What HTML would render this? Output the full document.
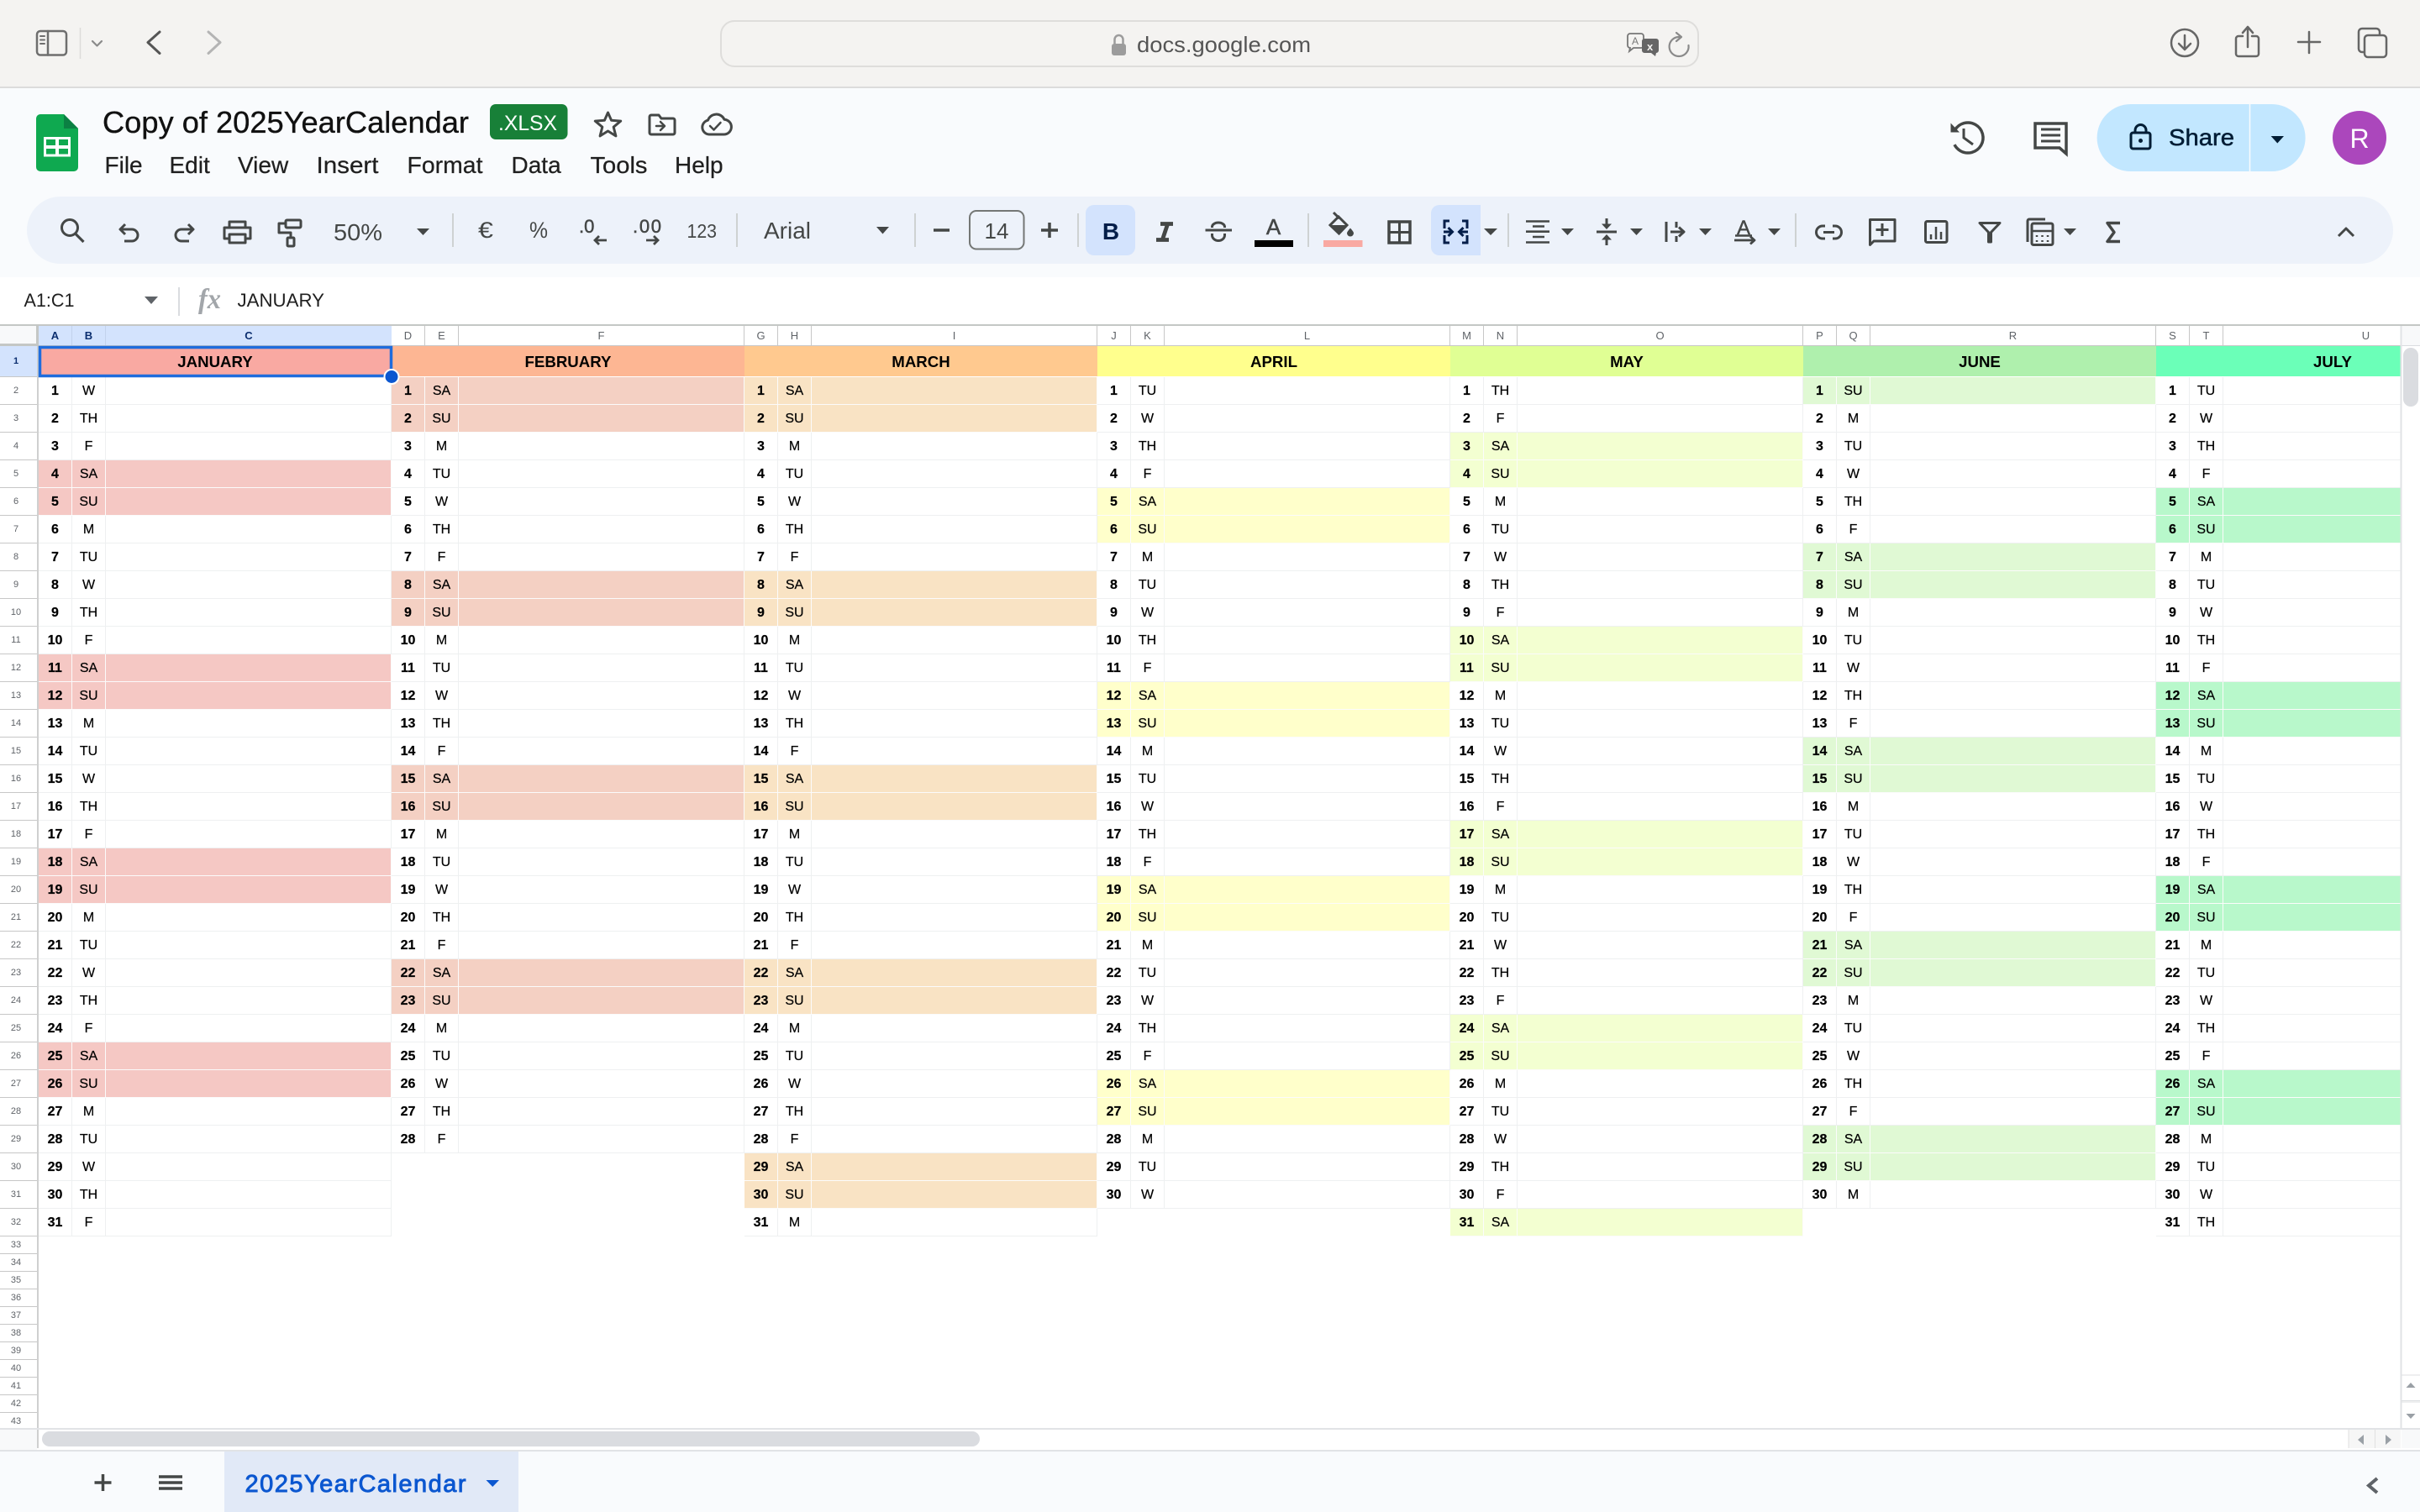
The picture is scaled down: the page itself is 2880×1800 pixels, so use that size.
<!DOCTYPE html>
<html><head><meta charset="utf-8"><title>Copy of 2025YearCalendar</title>
<style>
html,body{margin:0;padding:0;width:2880px;height:1800px;overflow:hidden;background:#fff;font-family:"Liberation Sans",Arial,sans-serif}
.a{position:absolute}
#ch{left:46px;top:388px;width:2811px;height:24px;overflow:hidden;background:#fff;display:flex;border-bottom:1px solid #c7c7c7;box-sizing:border-box;font-size:13px;color:#5f6368;line-height:23px;text-align:center}
#ch span{flex:0 0 auto;width:40px;box-sizing:border-box;border-right:1px solid #c7c7c7;height:24px}
#ch span.l{width:340px}
#ch span.s{background:#d3e3fd;color:#0b2e6f;font-weight:bold;border-right-color:#c2d2ec}
#rh{left:0;top:412px;width:46px;height:1288px;overflow:hidden;background:#fff;border-right:2px solid #cfd0d0;box-sizing:border-box;font-size:11px;color:#5f6368;text-align:center;padding-right:6px}
#rh div{height:33px;line-height:33px;box-sizing:border-box;border-bottom:1px solid #c7c7c7;margin-right:-6px;padding-right:6px}
#rh div.h1{height:37px;line-height:36px;background:#d3e3fd;color:#0b2e6f;font-weight:bold}
#rh div.t{height:21px;line-height:20px}
#g{left:46px;top:412px;width:2811px;height:1288px;overflow:hidden;background:#fff}
.m{position:absolute;top:0;width:420px}
.m h3{margin:0;height:37px;line-height:37px;font-size:18.67px;font-weight:bold;text-align:center;color:#000;border-bottom:1px solid #fff;box-sizing:border-box}
.m p{margin:0;height:33px;display:flex;box-sizing:border-box;border-bottom:1px solid #eef0f1;border-right:1px solid #eef0f1;font-size:16px;line-height:33px;color:#000}
.m b,.m i{width:40px;font-style:normal;text-align:center;box-sizing:border-box;border-right:1px solid #eef0f1;-webkit-text-stroke:.2px #000}
.m p.w,.m p.w b,.m p.w i{border-color:#fbfbfb}
.j p.w{background:#f5c8c4}.f p.w{background:#f4d0c3}.r p.w{background:#f9e3c4}.p p.w{background:#ffffcb}.y p.w{background:#f3ffd1}.n p.w{background:#e0f9d4}.u p.w{background:#b8f8cb}
#top{left:0;top:0;width:2880px;height:105px;background:#f4f3f1;border-bottom:2px solid #dcdcdc;box-sizing:border-box}
#hd{left:0;top:105px;width:2880px;height:225px;background:#f9fbfd}
#ft{left:0;top:1726px;width:2880px;height:74px;background:#f9fbfd;border-top:2px solid #e1e3e6;box-sizing:border-box}
svg{position:absolute;left:0;top:0}
svg text{font-family:"Liberation Sans",Arial,sans-serif}
</style></head><body>
<div class="a" id="top"></div>
<div class="a" id="hd"></div>
<div class="a" id="ch"><span class="s">A</span><span class="s">B</span><span class="s l" style="border-right:0">C</span><span>D</span><span>E</span><span class="l">F</span><span>G</span><span>H</span><span class="l">I</span><span>J</span><span>K</span><span class="l">L</span><span>M</span><span>N</span><span class="l">O</span><span>P</span><span>Q</span><span class="l">R</span><span>S</span><span>T</span><span class="l">U</span></div>
<div class="a" style="left:0;top:388px;width:46px;height:24px;background:#f8f9fa;border-right:3px solid #c4c7c5;border-bottom:3px solid #c4c7c5;box-sizing:border-box"></div>
<div class="a" style="left:0;top:386px;width:2880px;height:2px;background:#c4c7c5"></div>
<div class="a" id="rh"><div class="h1">1</div><div>2</div><div>3</div><div>4</div><div>5</div><div>6</div><div>7</div><div>8</div><div>9</div><div>10</div><div>11</div><div>12</div><div>13</div><div>14</div><div>15</div><div>16</div><div>17</div><div>18</div><div>19</div><div>20</div><div>21</div><div>22</div><div>23</div><div>24</div><div>25</div><div>26</div><div>27</div><div>28</div><div>29</div><div>30</div><div>31</div><div>32</div><div class="t">33</div><div class="t">34</div><div class="t">35</div><div class="t">36</div><div class="t">37</div><div class="t">38</div><div class="t">39</div><div class="t">40</div><div class="t">41</div><div class="t">42</div><div class="t">43</div></div>
<div class="a" id="g">
<div class="m j" style="left:0"><h3 style="background:#f9a9a2">JANUARY</h3>
<p><b>1</b><i>W</i></p><p><b>2</b><i>TH</i></p><p><b>3</b><i>F</i></p><p class="w"><b>4</b><i>SA</i></p><p class="w"><b>5</b><i>SU</i></p><p><b>6</b><i>M</i></p><p><b>7</b><i>TU</i></p><p><b>8</b><i>W</i></p><p><b>9</b><i>TH</i></p><p><b>10</b><i>F</i></p><p class="w"><b>11</b><i>SA</i></p><p class="w"><b>12</b><i>SU</i></p><p><b>13</b><i>M</i></p><p><b>14</b><i>TU</i></p><p><b>15</b><i>W</i></p><p><b>16</b><i>TH</i></p><p><b>17</b><i>F</i></p><p class="w"><b>18</b><i>SA</i></p><p class="w"><b>19</b><i>SU</i></p><p><b>20</b><i>M</i></p><p><b>21</b><i>TU</i></p><p><b>22</b><i>W</i></p><p><b>23</b><i>TH</i></p><p><b>24</b><i>F</i></p><p class="w"><b>25</b><i>SA</i></p><p class="w"><b>26</b><i>SU</i></p><p><b>27</b><i>M</i></p><p><b>28</b><i>TU</i></p><p><b>29</b><i>W</i></p><p><b>30</b><i>TH</i></p><p><b>31</b><i>F</i></p></div>
<div class="m f" style="left:420px"><h3 style="background:#fdb693">FEBRUARY</h3>
<p class="w"><b>1</b><i>SA</i></p><p class="w"><b>2</b><i>SU</i></p><p><b>3</b><i>M</i></p><p><b>4</b><i>TU</i></p><p><b>5</b><i>W</i></p><p><b>6</b><i>TH</i></p><p><b>7</b><i>F</i></p><p class="w"><b>8</b><i>SA</i></p><p class="w"><b>9</b><i>SU</i></p><p><b>10</b><i>M</i></p><p><b>11</b><i>TU</i></p><p><b>12</b><i>W</i></p><p><b>13</b><i>TH</i></p><p><b>14</b><i>F</i></p><p class="w"><b>15</b><i>SA</i></p><p class="w"><b>16</b><i>SU</i></p><p><b>17</b><i>M</i></p><p><b>18</b><i>TU</i></p><p><b>19</b><i>W</i></p><p><b>20</b><i>TH</i></p><p><b>21</b><i>F</i></p><p class="w"><b>22</b><i>SA</i></p><p class="w"><b>23</b><i>SU</i></p><p><b>24</b><i>M</i></p><p><b>25</b><i>TU</i></p><p><b>26</b><i>W</i></p><p><b>27</b><i>TH</i></p><p><b>28</b><i>F</i></p></div>
<div class="m r" style="left:840px"><h3 style="background:#ffc98f">MARCH</h3>
<p class="w"><b>1</b><i>SA</i></p><p class="w"><b>2</b><i>SU</i></p><p><b>3</b><i>M</i></p><p><b>4</b><i>TU</i></p><p><b>5</b><i>W</i></p><p><b>6</b><i>TH</i></p><p><b>7</b><i>F</i></p><p class="w"><b>8</b><i>SA</i></p><p class="w"><b>9</b><i>SU</i></p><p><b>10</b><i>M</i></p><p><b>11</b><i>TU</i></p><p><b>12</b><i>W</i></p><p><b>13</b><i>TH</i></p><p><b>14</b><i>F</i></p><p class="w"><b>15</b><i>SA</i></p><p class="w"><b>16</b><i>SU</i></p><p><b>17</b><i>M</i></p><p><b>18</b><i>TU</i></p><p><b>19</b><i>W</i></p><p><b>20</b><i>TH</i></p><p><b>21</b><i>F</i></p><p class="w"><b>22</b><i>SA</i></p><p class="w"><b>23</b><i>SU</i></p><p><b>24</b><i>M</i></p><p><b>25</b><i>TU</i></p><p><b>26</b><i>W</i></p><p><b>27</b><i>TH</i></p><p><b>28</b><i>F</i></p><p class="w"><b>29</b><i>SA</i></p><p class="w"><b>30</b><i>SU</i></p><p><b>31</b><i>M</i></p></div>
<div class="m p" style="left:1260px"><h3 style="background:#ffff8d">APRIL</h3>
<p><b>1</b><i>TU</i></p><p><b>2</b><i>W</i></p><p><b>3</b><i>TH</i></p><p><b>4</b><i>F</i></p><p class="w"><b>5</b><i>SA</i></p><p class="w"><b>6</b><i>SU</i></p><p><b>7</b><i>M</i></p><p><b>8</b><i>TU</i></p><p><b>9</b><i>W</i></p><p><b>10</b><i>TH</i></p><p><b>11</b><i>F</i></p><p class="w"><b>12</b><i>SA</i></p><p class="w"><b>13</b><i>SU</i></p><p><b>14</b><i>M</i></p><p><b>15</b><i>TU</i></p><p><b>16</b><i>W</i></p><p><b>17</b><i>TH</i></p><p><b>18</b><i>F</i></p><p class="w"><b>19</b><i>SA</i></p><p class="w"><b>20</b><i>SU</i></p><p><b>21</b><i>M</i></p><p><b>22</b><i>TU</i></p><p><b>23</b><i>W</i></p><p><b>24</b><i>TH</i></p><p><b>25</b><i>F</i></p><p class="w"><b>26</b><i>SA</i></p><p class="w"><b>27</b><i>SU</i></p><p><b>28</b><i>M</i></p><p><b>29</b><i>TU</i></p><p><b>30</b><i>W</i></p></div>
<div class="m y" style="left:1680px"><h3 style="background:#e0ff94">MAY</h3>
<p><b>1</b><i>TH</i></p><p><b>2</b><i>F</i></p><p class="w"><b>3</b><i>SA</i></p><p class="w"><b>4</b><i>SU</i></p><p><b>5</b><i>M</i></p><p><b>6</b><i>TU</i></p><p><b>7</b><i>W</i></p><p><b>8</b><i>TH</i></p><p><b>9</b><i>F</i></p><p class="w"><b>10</b><i>SA</i></p><p class="w"><b>11</b><i>SU</i></p><p><b>12</b><i>M</i></p><p><b>13</b><i>TU</i></p><p><b>14</b><i>W</i></p><p><b>15</b><i>TH</i></p><p><b>16</b><i>F</i></p><p class="w"><b>17</b><i>SA</i></p><p class="w"><b>18</b><i>SU</i></p><p><b>19</b><i>M</i></p><p><b>20</b><i>TU</i></p><p><b>21</b><i>W</i></p><p><b>22</b><i>TH</i></p><p><b>23</b><i>F</i></p><p class="w"><b>24</b><i>SA</i></p><p class="w"><b>25</b><i>SU</i></p><p><b>26</b><i>M</i></p><p><b>27</b><i>TU</i></p><p><b>28</b><i>W</i></p><p><b>29</b><i>TH</i></p><p><b>30</b><i>F</i></p><p class="w"><b>31</b><i>SA</i></p></div>
<div class="m n" style="left:2100px"><h3 style="background:#aff0ad">JUNE</h3>
<p class="w"><b>1</b><i>SU</i></p><p><b>2</b><i>M</i></p><p><b>3</b><i>TU</i></p><p><b>4</b><i>W</i></p><p><b>5</b><i>TH</i></p><p><b>6</b><i>F</i></p><p class="w"><b>7</b><i>SA</i></p><p class="w"><b>8</b><i>SU</i></p><p><b>9</b><i>M</i></p><p><b>10</b><i>TU</i></p><p><b>11</b><i>W</i></p><p><b>12</b><i>TH</i></p><p><b>13</b><i>F</i></p><p class="w"><b>14</b><i>SA</i></p><p class="w"><b>15</b><i>SU</i></p><p><b>16</b><i>M</i></p><p><b>17</b><i>TU</i></p><p><b>18</b><i>W</i></p><p><b>19</b><i>TH</i></p><p><b>20</b><i>F</i></p><p class="w"><b>21</b><i>SA</i></p><p class="w"><b>22</b><i>SU</i></p><p><b>23</b><i>M</i></p><p><b>24</b><i>TU</i></p><p><b>25</b><i>W</i></p><p><b>26</b><i>TH</i></p><p><b>27</b><i>F</i></p><p class="w"><b>28</b><i>SA</i></p><p class="w"><b>29</b><i>SU</i></p><p><b>30</b><i>M</i></p></div>
<div class="m u" style="left:2520px"><h3 style="background:#6bffb8">JULY</h3>
<p><b>1</b><i>TU</i></p><p><b>2</b><i>W</i></p><p><b>3</b><i>TH</i></p><p><b>4</b><i>F</i></p><p class="w"><b>5</b><i>SA</i></p><p class="w"><b>6</b><i>SU</i></p><p><b>7</b><i>M</i></p><p><b>8</b><i>TU</i></p><p><b>9</b><i>W</i></p><p><b>10</b><i>TH</i></p><p><b>11</b><i>F</i></p><p class="w"><b>12</b><i>SA</i></p><p class="w"><b>13</b><i>SU</i></p><p><b>14</b><i>M</i></p><p><b>15</b><i>TU</i></p><p><b>16</b><i>W</i></p><p><b>17</b><i>TH</i></p><p><b>18</b><i>F</i></p><p class="w"><b>19</b><i>SA</i></p><p class="w"><b>20</b><i>SU</i></p><p><b>21</b><i>M</i></p><p><b>22</b><i>TU</i></p><p><b>23</b><i>W</i></p><p><b>24</b><i>TH</i></p><p><b>25</b><i>F</i></p><p class="w"><b>26</b><i>SA</i></p><p class="w"><b>27</b><i>SU</i></p><p><b>28</b><i>M</i></p><p><b>29</b><i>TU</i></p><p><b>30</b><i>W</i></p><p><b>31</b><i>TH</i></p></div>
</div>
<div class="a" id="ft"></div>

<svg width="2880" height="1800" viewBox="0 0 2880 1800" xmlns="http://www.w3.org/2000/svg">
<!-- selection -->
<rect x="47.5" y="413.5" width="418" height="34" fill="none" stroke="#1f6cdc" stroke-width="3.5"/>
<circle cx="466" cy="448.5" r="8.5" fill="#0b57d0" stroke="#fff" stroke-width="2"/>

<!-- browser bar -->
<g fill="none" stroke="#6e6e6e" stroke-width="2.5" stroke-linecap="round" stroke-linejoin="round">
<rect x="44" y="37" width="35" height="28.5" rx="4"/><path d="M57 37v28.5"/><path d="M48 43h5M48 47.5h5M48 52h5" stroke-width="2"/>
</g>
<path d="M95.5 33v37" stroke="#dcdbd9" stroke-width="1.5"/>
<path d="M110 49l5.5 5.5 5.5-5.5" fill="none" stroke="#8a8a8a" stroke-width="2.2" stroke-linecap="round" stroke-linejoin="round"/>
<path d="M190 38l-14 12.5 14 13" fill="none" stroke="#555" stroke-width="3" stroke-linecap="round" stroke-linejoin="round"/>
<path d="M248 38l14 12.5-14 13" fill="none" stroke="#b4b4b4" stroke-width="3" stroke-linecap="round" stroke-linejoin="round"/>
<rect x="858" y="25" width="1163" height="54" rx="16" fill="#f4f3f1" stroke="#dedddb" stroke-width="2"/>
<rect x="1323" y="52" width="17" height="14" rx="3" fill="#9c9c9c"/><path d="M1326.5 52v-5a5 5 0 0 1 10 0v5" fill="none" stroke="#9c9c9c" stroke-width="2.5"/>
<text x="1353" y="62" font-size="26" fill="#555" textLength="207" lengthAdjust="spacingAndGlyphs">docs.google.com</text>
<path d="M1940 40h13a3 3 0 0 1 3 3v11a3 3 0 0 1-3 3h-9l-5 4 1-4a3 3 0 0 1-3-3V43a3 3 0 0 1 3-3z" fill="#f4f3f1" stroke="#777" stroke-width="1.8"/>
<text x="1942" y="53" font-size="12" fill="#777">A</text>
<path d="M1957 46h14a3 3 0 0 1 3 3v11a3 3 0 0 1-3 3l-1 4-5-4h-8a3 3 0 0 1-3-3V49a3 3 0 0 1 3-3z" fill="#666"/>
<text x="1960" y="60" font-size="13" fill="#f4f3f1" font-weight="bold">x</text>
<path d="M1998 44a11.5 11.5 0 1 0 11.5 10" fill="none" stroke="#8a8a8a" stroke-width="2.2" stroke-linecap="round"/><path d="M1995 39l6 5-6 5" fill="none" stroke="#8a8a8a" stroke-width="2.2" stroke-linecap="round" stroke-linejoin="round"/>
<g fill="none" stroke="#666" stroke-width="2.5" stroke-linecap="round" stroke-linejoin="round">
<circle cx="2600" cy="51" r="16"/><path d="M2600 42v17M2593 52l7 7 7-7"/>
<path d="M2669 43h-5a3 3 0 0 0-3 3v18a3 3 0 0 0 3 3h21a3 3 0 0 0 3-3V46a3 3 0 0 0-3-3h-5M2675 33v23M2669 39l6-7 6 7"/>
<path d="M2748 38v25M2735 50h26"/>
<rect x="2807" y="34" width="25" height="28" rx="4"/><rect x="2814" y="42" width="26" height="26" rx="4" fill="#f4f3f1"/>
</g>

<!-- doc header -->
<path d="M48 136H76L93 153V199a5 5 0 0 1-5 5H48a5 5 0 0 1-5-5V141a5 5 0 0 1 5-5Z" fill="#0fa950"/>
<path d="M76 136V153H93Z" fill="#0b8043"/>
<rect x="52" y="163" width="32" height="23.5" fill="#fff"/>
<g fill="#0fa950"><rect x="55" y="166" width="11" height="7"/><rect x="70" y="166" width="11" height="7"/><rect x="55" y="177" width="11" height="6.5"/><rect x="70" y="177" width="11" height="6.5"/></g>
<text x="122" y="158" font-size="36" fill="#111" stroke="#111" stroke-width=".35" textLength="436" lengthAdjust="spacingAndGlyphs">Copy of 2025YearCalendar</text>
<rect x="583" y="124" width="92.5" height="42" rx="7" fill="#188038"/>
<text x="593" y="155" font-size="25" fill="#fff" textLength="70" lengthAdjust="spacingAndGlyphs">.XLSX</text>
<g fill="none" stroke="#444746" stroke-width="3" stroke-linejoin="round" stroke-linecap="round">
<path d="M723.5 134l4.1 9.3 11.1.8-8.5 7.1 2.7 10.7-9.4-5.9-9.4 5.9 2.7-10.7-8.5-7.1 11.1-.8z"/>
<path d="M775 137h9l3 4h14a2 2 0 0 1 2 2v15a2 2 0 0 1-2 2h-26a2 2 0 0 1-2-2v-19a2 2 0 0 1 2-2z"/>
<path d="M781 150h9M786 145l5 5-5 5" stroke-width="2.5"/>
<path d="M844 160a8.5 8.5 0 0 1-1.5-16.8 10.5 10.5 0 0 1 19.5-1 8.700 8.700 0 0 1-1 17.800z"/>
<path d="M845 150l4.500 4.500 8-8.500" stroke-width="2.500"/>
</g>
<g font-size="28" fill="#1f1f1f" stroke="#1f1f1f" stroke-width=".25">
<text x="124.500" y="206">File</text><text x="201.500" y="206">Edit</text><text x="283" y="206">View</text><text x="376.500" y="206" textLength="74" lengthAdjust="spacingAndGlyphs">Insert</text><text x="484.500" y="206" textLength="90" lengthAdjust="spacingAndGlyphs">Format</text><text x="608.500" y="206">Data</text><text x="702.500" y="206" textLength="68" lengthAdjust="spacingAndGlyphs">Tools</text><text x="803" y="206">Help</text>
</g>
<g fill="none" stroke="#444746" stroke-width="3.500" stroke-linejoin="miter">
<circle cx="2342" cy="164" r="18" stroke-dasharray="95 18" transform="rotate(-150 2342 164)"/>
<path d="M2337 153v11l11 8" stroke-width="3"/>
<path d="M2422 147h37v36l-8-7h-29z"/>
<path d="M2429 154h23M2429 161h23M2429 168h23" stroke-width="3"/>
</g>
<path d="M2321.500 146.500v11h10.500z" fill="#444746"/>
<rect x="2495.600" y="124" width="248" height="80" rx="40" fill="#c2e7ff"/>
<path d="M2677.500 124v80" stroke="#f9fbfd" stroke-width="1.500"/>
<rect x="2536" y="158" width="23" height="19" rx="2.500" fill="none" stroke="#001d35" stroke-width="3"/>
<path d="M2541 158v-3a6.500 6.500 0 0 1 13 0v3" fill="none" stroke="#001d35" stroke-width="3"/><circle cx="2547.500" cy="167.500" r="2.500" fill="#001d35"/>
<text x="2581" y="173" font-size="28" fill="#001d35" stroke="#001d35" stroke-width=".5" textLength="78" lengthAdjust="spacingAndGlyphs">Share</text>
<path d="M2702.600 162h15.400l-7.700 8.500z" fill="#001d35"/>
<circle cx="2808" cy="164" r="32" fill="#ab47bc"/>
<text x="2808" y="176" font-size="32" fill="#fff" text-anchor="middle">R</text>

<!-- toolbar -->
<rect x="32" y="234" width="2816" height="80" rx="40" fill="#edf2fa"/>
<g fill="none" stroke="#444746" stroke-width="3" stroke-linejoin="round" stroke-linecap="butt">
<circle cx="83" cy="271" r="9.500"/><path d="M89.500 278l10 10" stroke-width="3.200"/>
<path d="M149 267l-6 6 6 6M144 273h13a7 7 0 0 1 0 14h-9"/>
<path d="M224 267l6 6-6 6M229 273h-13a7 7 0 0 0 0 14h9"/>
<path d="M273 271v-7h19v7M273 284h-6v-13h31v13h-6M273 279h19v10h-19z"/>
<rect x="340" y="262" width="18" height="9" rx="1.500"/><path d="M340 266h-8v11h14v6"/><rect x="342" y="283" width="8" height="10" rx="1"/>
<path d="M1111 274h19M1249 265v18M1239 274h20" stroke-width="3.500"/>
<rect x="1154" y="251" width="64.500" height="45.500" rx="8" stroke="#747775" stroke-width="2"/>
<path d="M1442.500 271v-1a7.500 5 0 0 1 15 0v1M1442.500 278v2a7.500 6.500 0 0 0 15 0v-2M1434.500 274h31.500"/>
<rect x="1653" y="264" width="25" height="25" stroke-width="3.500" stroke-linejoin="miter"/><path d="M1665.500 264v25M1653 276.500h25" stroke-width="3"/>
<path d="M1816 263.500h28M1824 269.500h14M1816 275.700h28M1824 282h14M1816 288.500h28" stroke-width="2.600"/>
<path d="M1900 276h24" stroke-width="3"/><path d="M1912 260v9M1912 292v-9" stroke-width="3"/>
<path d="M1983 264v24M1995 264v7M1995 281v7" stroke-width="3"/><path d="M1988 276h15M1998 270.500l6 5.500-6 5.500" stroke-width="3"/>
<path d="M2065 280.500h20" stroke-width="2.500"/><path d="M2064 286h23M2083 281.500l5 4.500-5 4.500" stroke-width="2.800"/>
<path d="M2172 269h-3a7.500 7.500 0 0 0 0 15h3M2181 269h3a7.500 7.500 0 0 1 0 15h-3M2170 276.500h13"/>
<path d="M2225.500 261.500h29.500v25.500h-25l-4.500 4.500z"/><path d="M2240 266v15M2232.500 273.500h15"/>
<rect x="2291.500" y="263.500" width="25.500" height="25" rx="2"/><path d="M2298 279v6M2304 270v15M2310 276v9" stroke-width="2.500"/>
<path d="M2356 265.500h24l-10.500 11v11.500h-3v-11.500z"/>
<path d="M2413 288v-25a2 2 0 0 1 2-2h19"/><rect x="2418" y="266" width="25" height="25.500" rx="2"/><path d="M2418 275h25M2424 280v2M2430.500 280v2M2437 280v2M2424 286v2M2430.500 286v2M2437 286v2" stroke-width="2.500"/>
<path d="M2523 265.500h-15l8 11-8 11h15" stroke-width="3.500"/>
<path d="M2783 281l9-9 9 9" stroke-width="3"/>
</g>
<path d="M1906 266.500h12l-6 6.500zM1906 285.500h12l-6-6.500z" fill="#444746"/>
<g stroke="#c4c7c5" stroke-width="1.500"><path d="M539 254v40M877 254v40M1089 254v40M1283 254v40M1557 254v40M1795 254v40M2137 254v40"/></g>
<text x="397" y="286" font-size="28" fill="#444746" textLength="58" lengthAdjust="spacingAndGlyphs">50%</text>
<g fill="#444746"><path d="M496 272h15l-7.500 8zM1043 270h15l-7.500 8.500zM1858 272h15l-7.500 8zM1940 272h15l-7.500 8zM2022 272h15l-7.500 8zM2104 272h15l-7.500 8zM2456 272h15l-7.500 8zM1766 272h16l-8 8z"/></g>
<text x="569" y="283" font-size="27" fill="#444746" textLength="18" lengthAdjust="spacingAndGlyphs">€</text>
<text x="630" y="283" font-size="27" fill="#444746" textLength="22" lengthAdjust="spacingAndGlyphs">%</text>
<text x="689" y="277" font-size="22" fill="#444746" stroke="#444746" stroke-width=".5">.0</text>
<path d="M722 286h-13M713 281l-5 5 5 5" fill="none" stroke="#444746" stroke-width="2.800"/>
<text x="753" y="277" font-size="22" fill="#444746" stroke="#444746" stroke-width=".5" textLength="34">.00</text>
<path d="M769 286h14M778 281l5 5-5 5" fill="none" stroke="#444746" stroke-width="2.800"/>
<text x="817.500" y="283" font-size="23" fill="#444746" textLength="35.500" lengthAdjust="spacingAndGlyphs">123</text>
<text x="909" y="284" font-size="28" fill="#444746">Arial</text>
<text x="1186" y="284" font-size="26" fill="#444746" text-anchor="middle">14</text>
<rect x="1292" y="244" width="59" height="60" rx="10" fill="#d3e3fd"/>
<text x="1322" y="285" font-size="28" font-weight="bold" fill="#041e49" text-anchor="middle">B</text>
<path d="M1381 266.500h15M1376 285.500h15M1389.500 267l-6 18" fill="none" stroke="#444746" stroke-width="4.800"/>
<text x="1515.500" y="279" font-size="26" fill="#444746" stroke="#444746" stroke-width=".5" text-anchor="middle">A</text>
<rect x="1493" y="286" width="46" height="8" fill="#000"/>
<path d="M1593 258l10 10-9.500 10-10.500-10z" fill="none" stroke="#444746" stroke-width="3"/><path d="M1583 268h20l-9.500 10z" fill="#444746"/><path d="M1587 253l7 7" stroke="#444746" stroke-width="3"/>
<path d="M1607 271.500q-4 4.500-4 6a4 4 0 0 0 8 0q0-1.500-4-6z" fill="#444746"/>
<rect x="1575" y="286" width="46.500" height="8" fill="#f9a9a2"/>
<path d="M1713 244h49v60h-49a10 10 0 0 1-10-10v-40a10 10 0 0 1 10-10z" fill="#d3e3fd"/>
<path d="M1725 263h-6v9M1719 280v9h6M1740 263h6v9M1746 280v9h-6M1718 276h10M1723.500 271l5 5-5 5M1747 276h-10M1741.500 271l-5 5 5 5" fill="none" stroke="#041e49" stroke-width="3"/>
<text x="2075" y="279" font-size="24" fill="#444746" stroke="#444746" stroke-width=".4" text-anchor="middle">A</text>

<!-- formula bar -->
<text x="28.500" y="365" font-size="22" fill="#1f1f1f" textLength="60" lengthAdjust="spacingAndGlyphs">A1:C1</text>
<path d="M172 353h16l-8 9z" fill="#5f6368"/>
<path d="M213 342v34" stroke="#dadce0" stroke-width="2"/>
<text x="236" y="367" font-size="34" fill="#a2a6aa" font-style="italic" font-weight="bold" textLength="27" lengthAdjust="spacingAndGlyphs" style="font-family:'Liberation Serif',serif">fx</text>
<text x="282.500" y="365" font-size="22" fill="#1f1f1f" textLength="103.500" lengthAdjust="spacingAndGlyphs">JANUARY</text>

<!-- scrollbars -->
<rect x="2858" y="388" width="22" height="24" fill="#f8f9fa"/>
<path d="M2858 411.500h22" stroke="#dadce0" stroke-width="1"/>
<rect x="2856.500" y="388" width="2" height="1314" fill="#e1e3e6"/>
<rect x="2860" y="414" width="18" height="70" rx="9" fill="#dadce0"/>
<path d="M2858 1637h22M2858 1667.500h22M2858 1669h22" stroke="#dddfe2" stroke-width="1"/>
<path d="M2869 1646l5.500 6h-11zM2869 1689l5.500-6h-11z" fill="#9aa0a6"/>
<rect x="0" y="1702" width="2880" height="24" fill="#fff"/>
<rect x="0" y="1700" width="2880" height="2" fill="#e1e3e6"/>
<rect x="0" y="1702" width="44" height="24" fill="#f8f9fa"/><rect x="44" y="1702" width="2" height="22" fill="#cfd0d0"/>
<rect x="50" y="1704" width="1116" height="18" rx="9" fill="#dadce0"/>
<rect x="2795" y="1702" width="31" height="22" fill="#f6f6f6"/><rect x="2827" y="1702" width="30" height="22" fill="#f6f6f6"/>
<path d="M2795 1702v22M2826.500 1702v22" stroke="#e0e0e0" stroke-width="1"/>
<rect x="2858" y="1702" width="22" height="22" fill="#f8f9fa"/>
<path d="M2813 1708v12l-7-6zM2839 1708v12l7-6z" fill="#9aa0a6"/>

<!-- sheet tabs -->
<path d="M122.500 1755v20M112.500 1765h20" stroke="#444746" stroke-width="3.500"/>
<path d="M189 1758h28M189 1765h28M189 1772h28" stroke="#444746" stroke-width="3.500"/>
<rect x="267" y="1728" width="350" height="72" fill="#e1e9f7"/>
<text x="291.500" y="1776" font-size="29" fill="#0b57d0" stroke="#0b57d0" stroke-width=".9" textLength="263" lengthAdjust="spacing">2025YearCalendar</text>
<path d="M578.500 1762h15.500l-7.750 8z" fill="#0b57d0"/>
<path d="M2829 1760l-10 8.500 10 8.500" fill="none" stroke="#5f6368" stroke-width="4"/>
</svg>
</body></html>
